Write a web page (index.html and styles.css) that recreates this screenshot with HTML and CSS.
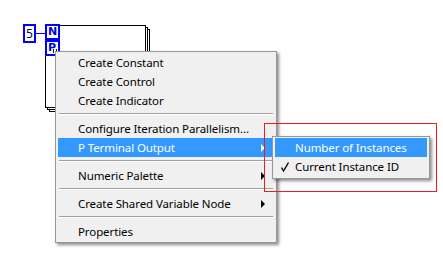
FILE: index.html
```html
<!DOCTYPE html>
<html lang="en">
<head>
    <meta charset="UTF-8">
    <title>P Terminal Output</title>
    <link rel="stylesheet" href="styles.css">
</head>
<body>
    <div class="canvas">
        <!-- block diagram: constant wired into a parallel for loop -->
        <div class="const">5</div>
        <div class="wire"></div>
        <div class="loop">
            <div class="loop-layer back2"></div>
            <div class="loop-layer back1"></div>
            <div class="loop-layer front"></div>
        </div>
        <div class="term term-n">N</div>
        <div class="term term-p">P<span class="bars"></span></div>

        <!-- shortcut menu -->
        <div class="menu main-menu">
            <div class="item">Create Constant</div>
            <div class="item">Create Control</div>
            <div class="item">Create Indicator</div>
            <div class="sep"></div>
            <div class="item">Configure Iteration Parallelism...</div>
            <div class="item active">P Terminal Output<span class="arrow"></span></div>
            <div class="sep"></div>
            <div class="item">Numeric Palette<span class="arrow"></span></div>
            <div class="sep"></div>
            <div class="item">Create Shared Variable Node<span class="arrow"></span></div>
            <div class="sep"></div>
            <div class="item">Properties</div>
        </div>

        <div class="menu sub-menu">
            <div class="item active">Number of Instances</div>
            <div class="item">
                <svg class="check" width="8" height="10" viewBox="0 0 8 10">
                    <polyline points="0.5,5.5 2.5,9 7.5,0.5" fill="none" stroke="#000" stroke-width="1.3"/>
                </svg>
                Current Instance ID
            </div>
        </div>

        <div class="callout"></div>
    </div>
</body>
</html>
```

FILE: styles.css
```css
body {
    margin: 0;
    background-color: #fff;
    font-family: "Noto Sans", "Open Sans", sans-serif;
    font-size: 11.5px;
    letter-spacing: -0.1px;
    color: #000;
}

.canvas {
    position: relative;
    width: 443px;
    height: 269px;
    overflow: hidden;
}

/* diagram */
.const {
    position: absolute;
    left: 23px;
    top: 24px;
    width: 13px;
    height: 19px;
    box-sizing: border-box;
    border: 2px solid #0000ff;
    background-color: #fffff4;
    color: #000060;
    font-size: 12px;
    line-height: 15px;
    text-align: center;
    letter-spacing: 0;
}

.wire {
    position: absolute;
    left: 36px;
    top: 33px;
    width: 10px;
    height: 1px;
    background-color: #0000ff;
}

.loop {
    position: absolute;
    left: 45px;
    top: 25px;
    width: 105px;
    height: 87px;
}

.loop-layer {
    position: absolute;
    width: 101px;
    height: 83px;
    box-sizing: border-box;
    border: 1px solid #000;
    background-color: #fff;
}

.back2 { left: 4px; top: 4px; }
.back1 { left: 2px; top: 2px; }
.front { left: 0; top: 0; }

.term {
    position: absolute;
    left: 45px;
    width: 15px;
    height: 16px;
    box-sizing: border-box;
    border: 2px solid #0000ff;
    background-color: #ffffd0;
    color: #0000ff;
    font-family: "DejaVu Sans", sans-serif;
    font-weight: bold;
    font-size: 11px;
    line-height: 12px;
    letter-spacing: 0;
    text-align: center;
}

.term-n { top: 24px; }

.term-p {
    top: 40px;
    text-align: left;
    padding-left: 1px;
}

.bars {
    position: absolute;
    right: 1px;
    bottom: 1px;
    width: 4px;
    height: 4px;
    border-left: 1px solid #0000ff;
    border-right: 1px solid #0000ff;
    box-sizing: border-box;
}

/* menus */
.menu {
    position: absolute;
    box-sizing: border-box;
    border: 1px solid #979797;
    background-color: #f0f0f0;
    box-shadow: 2px 2px 3px rgba(0, 0, 0, 0.45);
    display: flex;
    flex-direction: column;
}

.main-menu {
    left: 55px;
    top: 51px;
    width: 222px;
    padding: 1px 2px;
}

.sub-menu {
    left: 272px;
    top: 136px;
    width: 158px;
    padding: 1px 2px 2px;
}

.item {
    position: relative;
    display: flex;
    align-items: center;
    height: 19px;
    padding-left: 20px;
    padding-right: 9px;
    white-space: nowrap;
}

.item.active {
    background-color: #3399ff;
    color: #fff;
}

.arrow {
    margin-left: auto;
    width: 0;
    height: 0;
    border-left: 4px solid #000;
    border-top: 4px solid transparent;
    border-bottom: 4px solid transparent;
}

.item.active .arrow {
    border-left-color: #fff;
}

.sep {
    height: 9px;
    display: flex;
    flex-direction: column;
    padding: 3px 1px 0;
    box-sizing: border-box;
}

.sep::before {
    content: "";
    height: 1px;
    background-color: #a0a0a0;
}

.sep::after {
    content: "";
    height: 1px;
    background-color: #fff;
}

.check {
    position: absolute;
    left: 6px;
    top: 5px;
}

.callout {
    position: absolute;
    left: 264px;
    top: 123px;
    width: 173px;
    height: 69px;
    box-sizing: border-box;
    border: 1px solid #ed1c24;
}
```
